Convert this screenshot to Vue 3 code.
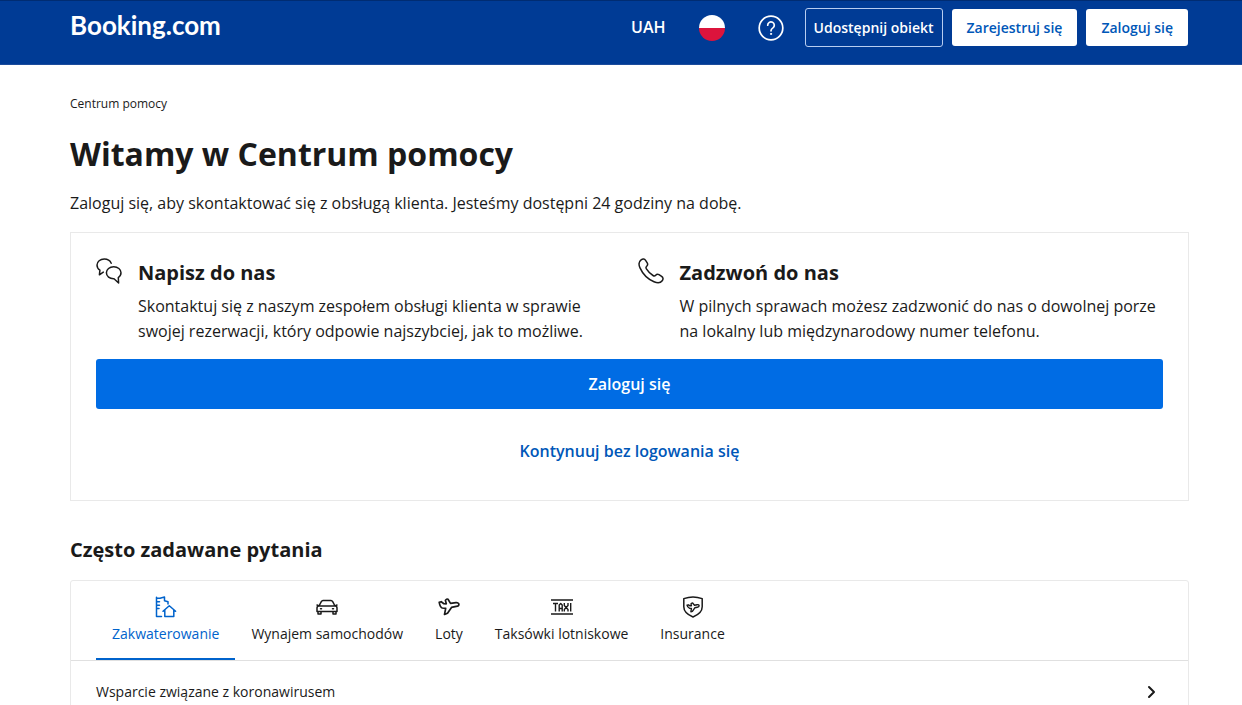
<script setup>
import { ref } from 'vue'

const tabs = [
  { id: 'stays', label: 'Zakwaterowanie' },
  { id: 'cars', label: 'Wynajem samochodów' },
  { id: 'flights', label: 'Loty' },
  { id: 'taxis', label: 'Taksówki lotniskowe' },
  { id: 'insurance', label: 'Insurance' },
]
const active = ref('stays')
</script>

<template>
  <div class="page">
    <header class="topbar">
      <a class="logo" href="#">Booking.com</a>
      <nav class="actions">
        <button class="plain currency" type="button">UAH</button>
        <button class="plain flag" type="button" aria-label="Polski">
          <svg viewBox="0 0 26 26" width="26" height="26">
            <path d="M0 13a13 13 0 0 1 26 0z" fill="#fff" />
            <path d="M0 13a13 13 0 0 0 26 0z" fill="#dc143c" />
          </svg>
        </button>
        <a class="help" href="#" aria-label="Pomoc">
          <svg viewBox="0 0 26 26" width="26" height="26" fill="none" stroke="#fff" stroke-linecap="round">
            <circle cx="13" cy="13" r="11.8" stroke-width="1.7" />
            <path d="M9.7 10.2a3.3 3.3 0 1 1 5.2 2.7c-1.2.8-1.9 1.4-1.9 2.9" stroke-width="1.7" />
            <circle cx="13" cy="18.9" r=".6" fill="#fff" stroke-width="1" />
          </svg>
        </a>
        <a class="btn outline" href="#">Udostępnij obiekt</a>
        <a class="btn solid" href="#">Zarejestruj się</a>
        <a class="btn solid" href="#">Zaloguj się</a>
      </nav>
    </header>

    <main class="content">
      <nav class="crumbs">Centrum pomocy</nav>
      <h1>Witamy w Centrum pomocy</h1>
      <p class="lead">Zaloguj się, aby skontaktować się z obsługą klienta. Jesteśmy dostępni 24 godziny na dobę.</p>

      <section class="card">
        <div class="ways">
          <article class="way">
            <svg class="way-icon" viewBox="0 0 26 26" width="26" height="26" fill="none" stroke="#1a1a1a" stroke-width="1.5" stroke-linecap="round" stroke-linejoin="round">
              <path d="M15.2 5.2C14 2.4 11.5 1 8.300 1 4.200 1 1 3.600 1 7.100c0 2.200 1.100 4 2.900 5.100L3.400 16.800l3.900-2.700" />
              <path d="M17.700 8.800c4.100 0 7.300 2.600 7.300 6 0 2-1 3.700-2.700 4.800l.3 5.400-4.600-4.300c-4.400.2-7.600-2.400-7.600-5.900 0-3.400 3.200-6 7.300-6z" />
            </svg>
            <div>
              <h2>Napisz do nas</h2>
              <p>Skontaktuj się z naszym zespołem obsługi klienta w sprawie swojej rezerwacji, który odpowie najszybciej, jak to możliwe.</p>
            </div>
          </article>
          <article class="way">
            <svg class="way-icon" viewBox="0 0 26 26" width="26" height="26" fill="none" stroke="#1a1a1a" stroke-width="1.5" stroke-linecap="round" stroke-linejoin="round">
              <path d="M3.100 1.800C5 .4 6.500.8 7.600 2.400l1.600 2.500c.8 1.300.5 2.400-.5 3.300-.9.800-.9 1.700-.3 2.700 1.700 2.700 3.900 4.900 6.600 6.600 1 .6 1.900.6 2.700-.3.900-1 2-1.300 3.300-.5l2.600 1.700c1.600 1.100 1.900 2.600.6 4.400-1.700 2.300-4.500 2.600-8.200 1C10.200 21.300 4.600 15.700 2 9.900.4 6.300.8 3.500 3.100 1.800z" />
            </svg>
            <div>
              <h2>Zadzwoń do nas</h2>
              <p>W pilnych sprawach możesz zadzwonić do nas o dowolnej porze na lokalny lub międzynarodowy numer telefonu.</p>
            </div>
          </article>
        </div>
        <button class="login" type="button">Zaloguj się</button>
        <a class="skip" href="#">Kontynuuj bez logowania się</a>
      </section>

      <h2 class="faq-title">Często zadawane pytania</h2>
      <section class="faq">
        <div class="tabs" role="tablist">
          <button
            v-for="tab in tabs"
            :key="tab.id"
            class="tab"
            :class="{ active: tab.id === active }"
            type="button"
            role="tab"
            :aria-selected="tab.id === active"
            @click="active = tab.id"
          >
            <svg viewBox="0 0 22 22" width="22" height="22" fill="none" stroke="currentColor" stroke-width="1.5" stroke-linecap="round" stroke-linejoin="round">
              <g v-if="tab.id === 'stays'" stroke-width="1.5">
                <path d="M6.500 20.500H1.500V1.200M1.500 2.200h3.500L9.500 1v1.800M1.500 5.800h3M1.500 9.200h3M1.500 12.600h2.500M9.500 2.800v2l3.500 1V8" />
                <path d="M8 15.200l6.300-5.500 6.300 5.500M9.800 14v6.500h9V14" />
              </g>
              <g v-else-if="tab.id === 'cars'">
                <path d="M3 10l2.300-4.300C5.700 5 6.200 4.500 7 4.500h8c.8 0 1.300.5 1.700 1.200L19 10M3 10h16c1.300 0 2 .8 2 2v3.500H1V12c0-1.200.7-2 2-2zM2 15.500V18h3v-2.500M17 15.500V18h3v-2.500M4.500 12.700h1M16.500 12.700h1M1 9l2 1M21 9l-2 1" />
              </g>
              <g v-else-if="tab.id === 'flights'" stroke-width="1.7">
                <path d="M1.200 6.400l2-.7 2.700 2 2.400.1-.9-3.400c.6-1.200 1.700-1.700 2.600-1.200L12.500 7.400l5.500-.7c1.900-.1 2.900.7 2.900 1.700 0 1.200-1.100 1.800-2.700 2L13.500 11.400l-4 5.800-3 1.200 1.200-6.100-3.500-.3C2.600 11.400 1.700 9 1.200 6.400z" />
              </g>
              <g v-else-if="tab.id === 'taxis'" stroke-linecap="butt">
                <path d="M0 4h22M0 18h22" />
                <path d="M2 7.500h5M4.500 7.500v8M8.200 15.500v-6.500l1.500-1.500 1.500 1.500v6.500M8.200 12.500h3M13.300 7v2.500l3.700 4v2M17 7v2.500l-3.700 4v2M19.700 7v8.500" stroke-width="1.4" />
              </g>
              <g v-else>
                <path d="M1.800 2.600C7.500.5 14.500.5 20.200 2.600v8.200c0 4.400-3.800 8-9.200 10.200C5.600 18.800 1.800 15.200 1.800 10.800z" />
                <path d="M5 9.200l1.400-.4 1.700 1 1.300-.1-.4-1.900c.5-.8 1.200-1 1.800-.6l1.700 2 2.600-.5c1.400-.2 2.100.3 2 1.100-.1.800-.8 1.200-1.800 1.400l-2.500.6-2.400 3.600-1.500.5.500-3.500-2-.2C6.200 11.600 5.300 10.600 5 9.200z" stroke-width="1.4" />
              </g>
            </svg>
            <span>{{ tab.label }}</span>
          </button>
        </div>
        <button class="question" type="button">
          <span>Wsparcie związane z koronawirusem</span>
          <svg viewBox="0 0 24 24" width="24" height="24" fill="none" stroke="#1a1a1a" stroke-width="2" stroke-linecap="round" stroke-linejoin="round">
            <path d="M10 7l5 5-5 5" />
          </svg>
        </button>
      </section>
    </main>
  </div>
</template>

<style>
body {
  margin: 0;
  background: #fff;
}
</style>

<style scoped>
.page {
  font-family: "Open Sans", "Noto Sans", sans-serif;
  font-size: 16px;
  line-height: 25px;
  color: #1a1a1a;
  height: 100vh;
  overflow: hidden;
}
button {
  font: inherit;
  color: inherit;
  cursor: pointer;
}
a {
  text-decoration: none;
}
svg {
  display: block;
  flex: none;
}
.topbar {
  display: flex;
  justify-content: space-between;
  align-items: flex-start;
  box-sizing: border-box;
  height: 65px;
  padding: 7px 54px 0 70px;
  background: #003b95;
  border-top: 1px solid #002c72;
  border-bottom: 1px solid #1c4c9c;
  color: #fff;
}
.logo {
  font-family: Lato, sans-serif;
  font-weight: 700;
  font-size: 26px;
  line-height: 34px;
  color: #fff;
}
.actions {
  display: flex;
  align-items: center;
  gap: 9px;
}
.plain {
  border: 0;
  padding: 0;
  background: none;
}
.currency {
  font-weight: 600;
}
.flag {
  margin: 0 24px;
}
.help {
  margin-right: 12px;
}
.btn {
  box-sizing: border-box;
  border-radius: 3px;
  padding: 6px 15px;
  font-size: 14px;
  font-weight: 600;
  white-space: nowrap;
}
.solid {
  background: #fff;
  color: #0057b8;
}
.outline {
  padding: 6px 8px;
  border: 1px solid #b8cdf0;
  color: #fff;
}
.content {
  padding: 26px 53px 0 70px;
}
.crumbs {
  font-size: 12px;
}
h1 {
  margin: 16px 0 15px;
  font-size: 32px;
  line-height: 44px;
  font-weight: 700;
}
.lead {
  margin: 0 0 16px;
}
.card {
  display: flex;
  flex-direction: column;
  padding: 25px;
  border: 1px solid #e9e9e9;
}
.ways {
  display: grid;
  grid-template-columns: 1fr 1fr;
  gap: 16px;
}
.way {
  display: flex;
  gap: 16px;
}
h2 {
  margin: 0;
  font-size: 20px;
  line-height: 30px;
  font-weight: 700;
}
.way p {
  margin: 6px 0 15px;
}
.login {
  height: 50px;
  border: 0;
  border-radius: 3px;
  background: #006ce4;
  color: #fff;
  font-weight: 600;
}
.skip {
  margin: 30px auto 11px;
  color: #0057b8;
  font-weight: 600;
}
.faq-title {
  margin: 34px 0 15px;
}
.faq {
  border: 1px solid #e9e9e9;
  border-radius: 3px;
}
.tabs {
  display: flex;
  padding: 0 25px;
  border-bottom: 1px solid #e0e0e0;
}
.tab {
  display: flex;
  flex-direction: column;
  align-items: center;
  gap: 3px;
  padding: 15px 16px 12px;
  border: 0;
  border-bottom: 2px solid transparent;
  background: none;
  font-size: 14px;
}
.active {
  color: #0063cc;
  border-bottom-color: #0063cc;
}
.question {
  display: flex;
  justify-content: space-between;
  align-items: center;
  width: 100%;
  padding: 18px 25px;
  border: 0;
  background: none;
  font-size: 14px;
  text-align: left;
}
</style>
